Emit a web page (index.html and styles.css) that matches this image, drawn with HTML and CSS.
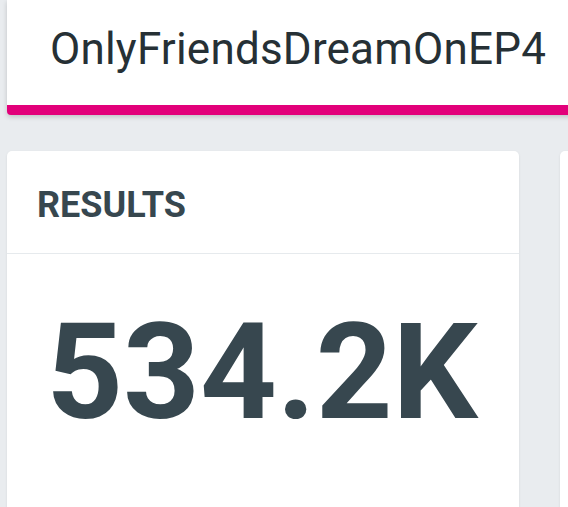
FILE: index.html
```html
<!DOCTYPE html>
<html lang="en">
<head>
<meta charset="utf-8">
<title>OnlyFriendsDreamOnEP4</title>
<link rel="stylesheet" href="styles.css">
</head>
<body>
<div class="page">
  <header class="top-card">
    <h1 class="title">OnlyFriendsDreamOnEP4</h1>
  </header>
  <div class="cards">
    <section class="card">
      <div class="card-header"><h2 class="card-title">RESULTS</h2></div>
      <div class="card-body"><div class="big-number">534.2K</div></div>
    </section>
    <section class="card"></section>
  </div>
</div>
</body>
</html>
```

FILE: styles.css
```css
html, body {
  margin: 0;
  padding: 0;
  background: #e9ecef;
  overflow: hidden;
  font-family: Roboto, "Noto Sans", sans-serif;
}
.page {
  padding-left: 7px;
  height: 507px;
  box-sizing: border-box;
  overflow: hidden;
}
.top-card {
  background: #fff;
  height: 105px;
  margin-right: -20px;
  border-bottom: 10px solid #e2007a;
  border-radius: 0 0 0 4px;
  box-shadow: 0 2px 5px rgba(0, 0, 0, 0.18);
  box-sizing: content-box;
}
.title {
  margin: 0;
  padding: 27px 0 0 43px;
  font-size: 44px;
  line-height: 44px;
  font-weight: 400;
  color: #263035;
  letter-spacing: 0.2px;
}
.cards {
  display: flex;
  gap: 41px;
  margin-top: 36px;
}
.card {
  width: 512px;
  flex: none;
  height: 420px;
  background: #fff;
  border-radius: 5px 5px 0 0;
  box-shadow: 0 1px 3px rgba(0, 0, 0, 0.08);
}
.card-header {
  height: 103px;
  box-sizing: border-box;
  padding: 36px 0 0 30px;
  border-bottom: 1px solid #e6eaed;
}
.card-title {
  margin: 0;
  font-size: 36px;
  line-height: 36px;
  font-weight: 700;
  color: #37474f;
}
.card-body {
  padding-top: 52px;
  text-align: center;
}
.big-number {
  font-size: 134px;
  line-height: 134px;
  font-weight: 700;
  color: #37474f;
  padding-right: 2px;
}
```
